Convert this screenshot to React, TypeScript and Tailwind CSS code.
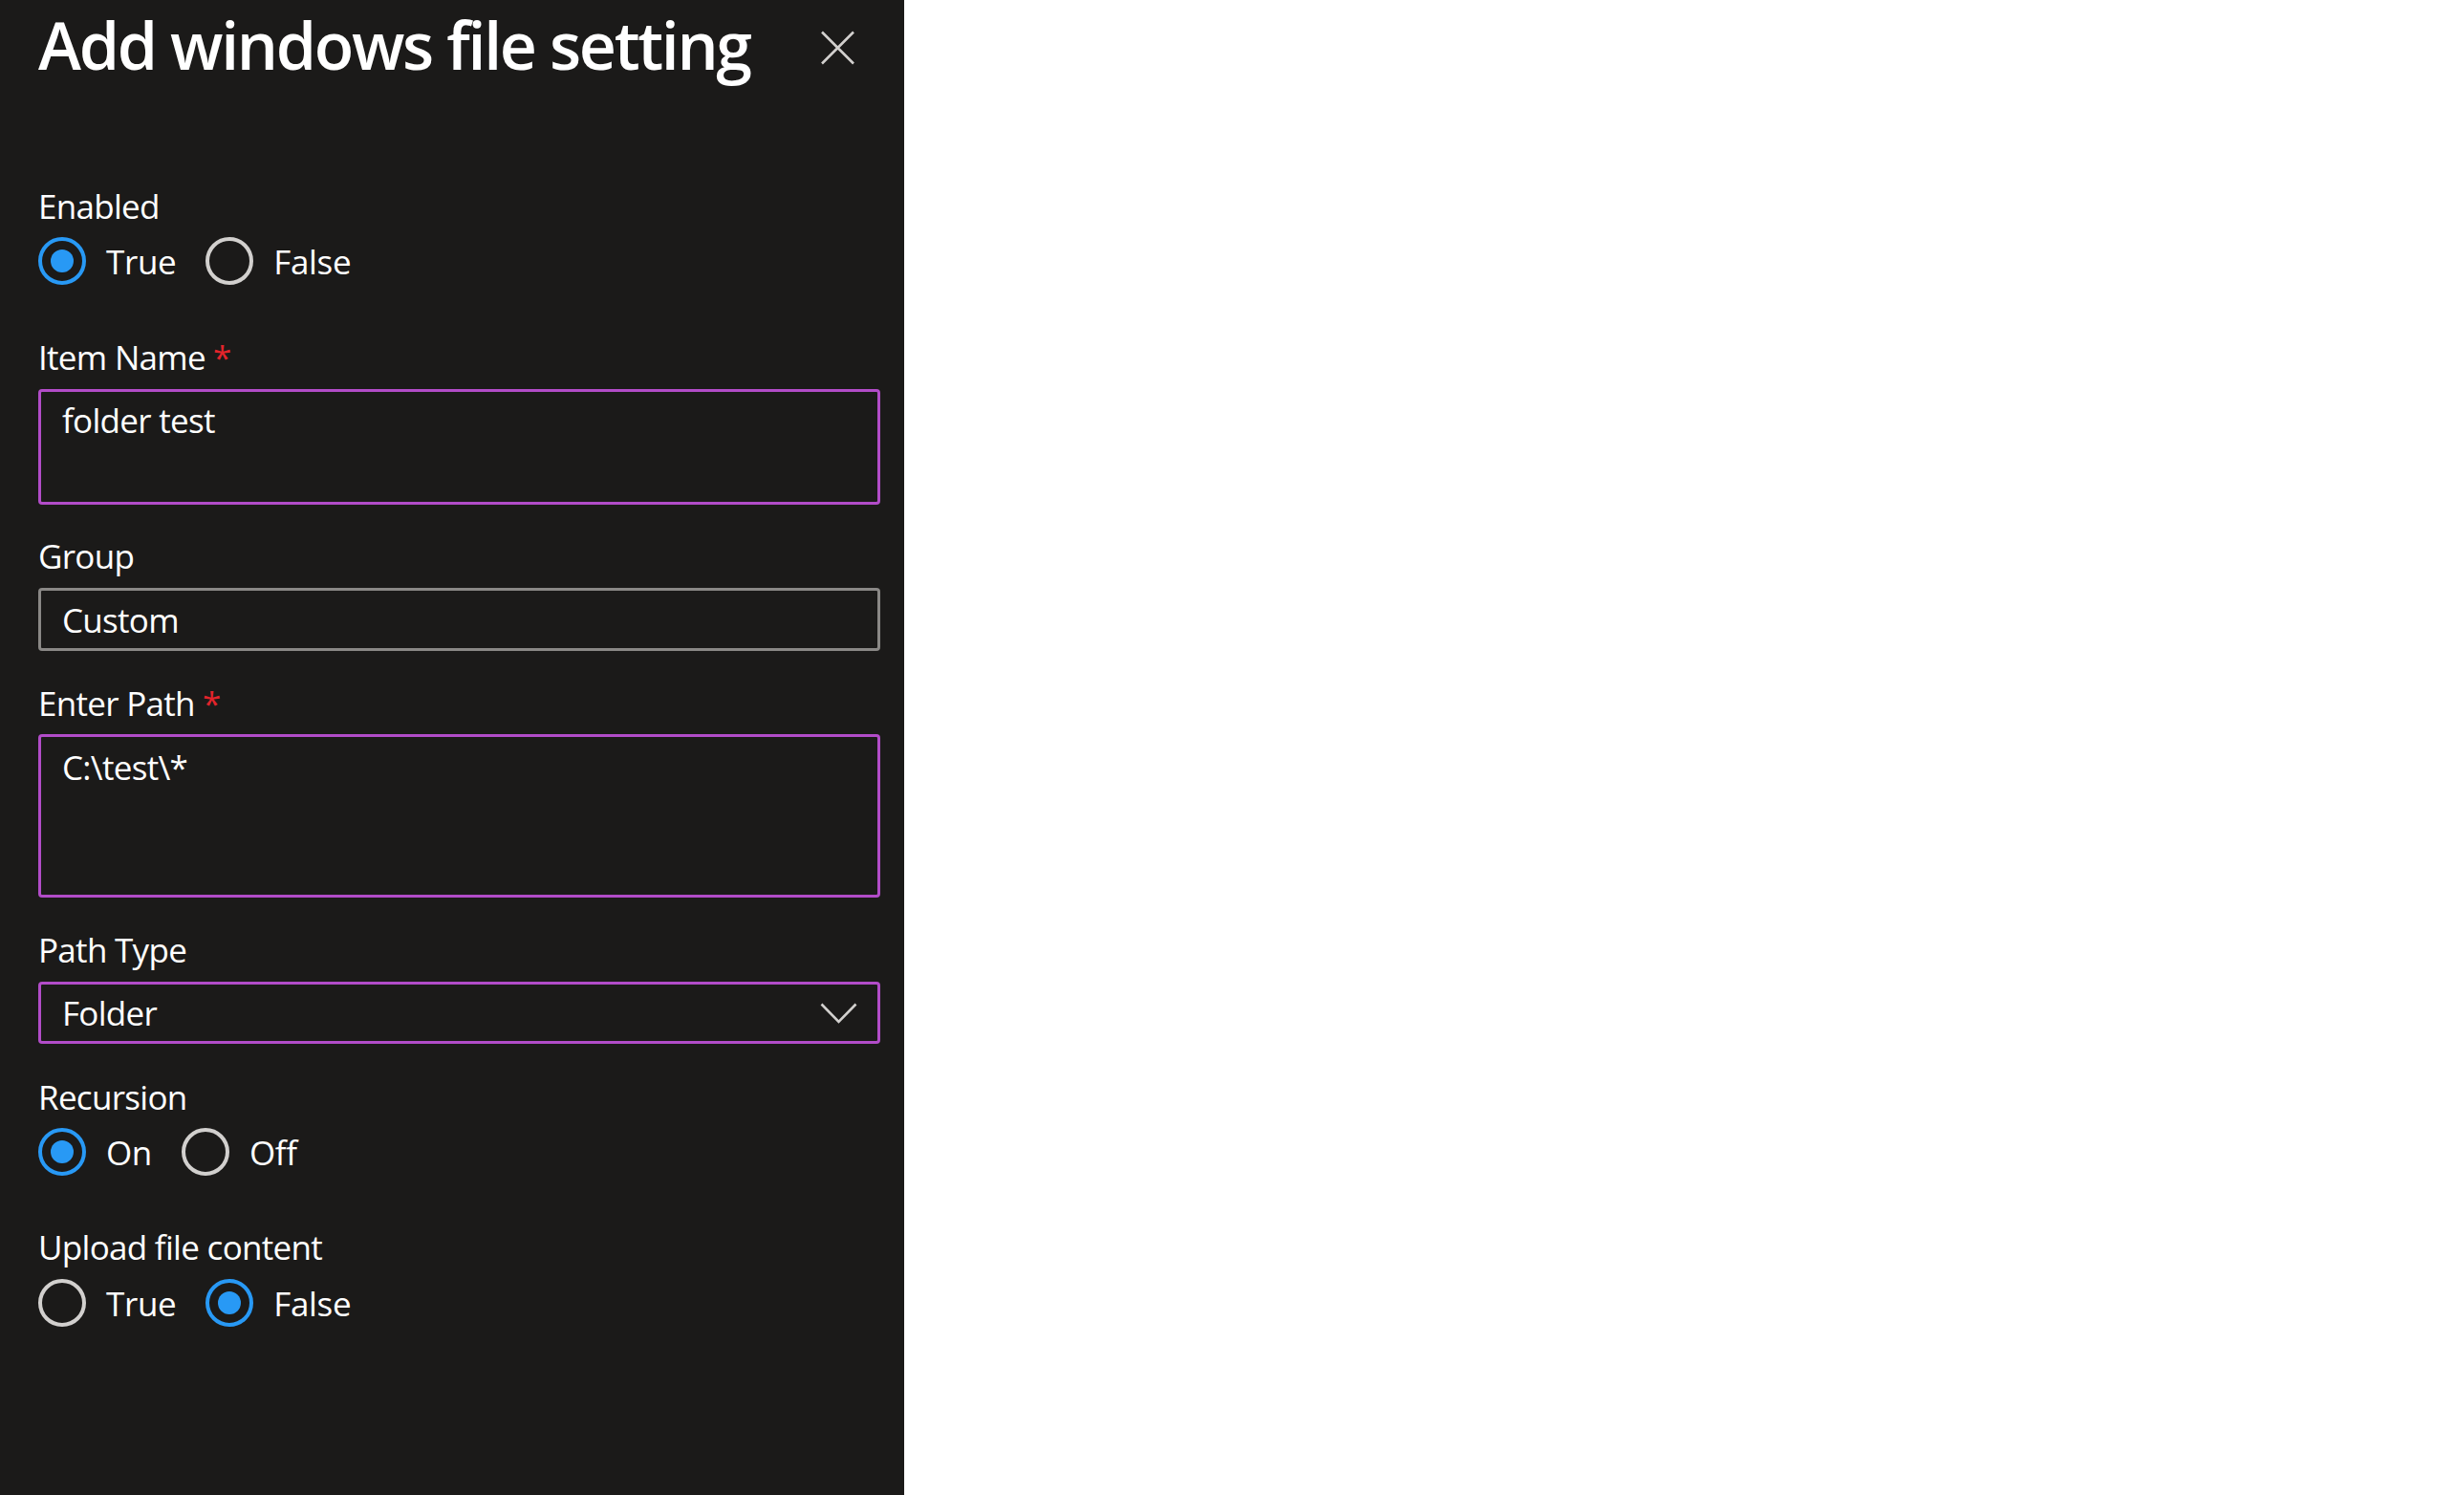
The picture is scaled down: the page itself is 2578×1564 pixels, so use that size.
import React from "react";

const font = { fontFamily: '"Open Sans", "Noto Sans", Arial, sans-serif' };

function Radio({ checked, label }: { checked: boolean; label: string }) {
  return (
    <label className="flex items-center">
      <span
        className={
          checked
            ? "flex h-[50px] w-[50px] shrink-0 items-center justify-center rounded-full border-[4px] border-[#2899f5]"
            : "flex h-[50px] w-[50px] shrink-0 items-center justify-center rounded-full border-[4px] border-[#d2d0ce]"
        }
      >
        {checked ? <span className="h-[24px] w-[24px] rounded-full bg-[#2899f5]" /> : null}
      </span>
      <span className="ml-[21px] text-[35px] leading-[35px] tracking-[-0.01em] text-white">{label}</span>
    </label>
  );
}

function Label({ text, required }: { text: string; required?: boolean }) {
  return (
    <div className="text-[35px] leading-[35px] tracking-[-0.02em] text-white">
      {text}
      {required ? <span className="ml-[8px] text-[#e3242b]">*</span> : null}
    </div>
  );
}

export default function App() {
  return (
    <div className="flex h-[1564px] w-full bg-white" style={font}>
      <aside className="relative h-full w-[946px] shrink-0 bg-[#1b1a19] pl-[40px] pr-[25px] pt-[1px]">
        <div className="flex items-start justify-between pt-[12px]">
          <h2 className="text-[68px] font-semibold leading-[68px] tracking-[-0.034em] text-white">
            Add windows file setting
          </h2>
          <button type="button" className="mr-[26px] mt-[19px] text-[#d2d0ce]">
            <svg width="37" height="36" viewBox="0 0 37 36" fill="none">
              <path d="M2 1.5 L35 34.5 M35 1.5 L2 34.5" stroke="currentColor" strokeWidth="2.6" />
            </svg>
          </button>
        </div>

        <div className="mt-[117px]">
          <Label text="Enabled" />
          <div className="mt-[15px] flex gap-[31px]">
            <Radio checked label="True" />
            <Radio checked={false} label="False" />
          </div>
        </div>

        <div className="mt-[58px]">
          <Label text="Item Name" required />
          <div className="mt-[16px] h-[121px] w-[881px] rounded-[4px] border-[3px] border-[#b24cc8] px-[22px] pt-[12px] text-[35px] leading-[35px] tracking-[-0.02em] text-white">
            folder test
          </div>
        </div>

        <div className="mt-[36px]">
          <Label text="Group" />
          <div className="mt-[16px] flex h-[66px] w-[881px] items-center rounded-[4px] border-[3px] border-[#8a8886] px-[22px] text-[35px] leading-[35px] tracking-[-0.02em] text-white">
            Custom
          </div>
        </div>

        <div className="mt-[37px]">
          <Label text="Enter Path" required />
          <div className="mt-[15px] h-[171px] w-[881px] rounded-[4px] border-[3px] border-[#b24cc8] px-[22px] pt-[14px] text-[35px] leading-[35px] tracking-[-0.02em] text-white">
            C:\test\*
          </div>
        </div>

        <div className="mt-[37px]">
          <Label text="Path Type" />
          <div className="mt-[16px] flex h-[65px] w-[881px] items-center justify-between rounded-[4px] border-[3px] border-[#b24cc8] pl-[22px] pr-[21px] text-[35px] leading-[35px] tracking-[-0.02em] text-white">
            <span>Folder</span>
            <svg width="39" height="22" viewBox="0 0 39 22" fill="none" className="text-[#d2d0ce]">
              <path d="M1.5 1.5 L19.5 20 L37.5 1.5" stroke="currentColor" strokeWidth="2.6" />
            </svg>
          </div>
        </div>

        <div className="mt-[38px]">
          <Label text="Recursion" />
          <div className="mt-[15px] flex gap-[31px]">
            <Radio checked label="On" />
            <Radio checked={false} label="Off" />
          </div>
        </div>

        <div className="mt-[57px]">
          <Label text="Upload file content" />
          <div className="mt-[16px] flex gap-[31px]">
            <Radio checked={false} label="True" />
            <Radio checked label="False" />
          </div>
        </div>
      </aside>
      <main className="flex-1 bg-white" />
    </div>
  );
}
